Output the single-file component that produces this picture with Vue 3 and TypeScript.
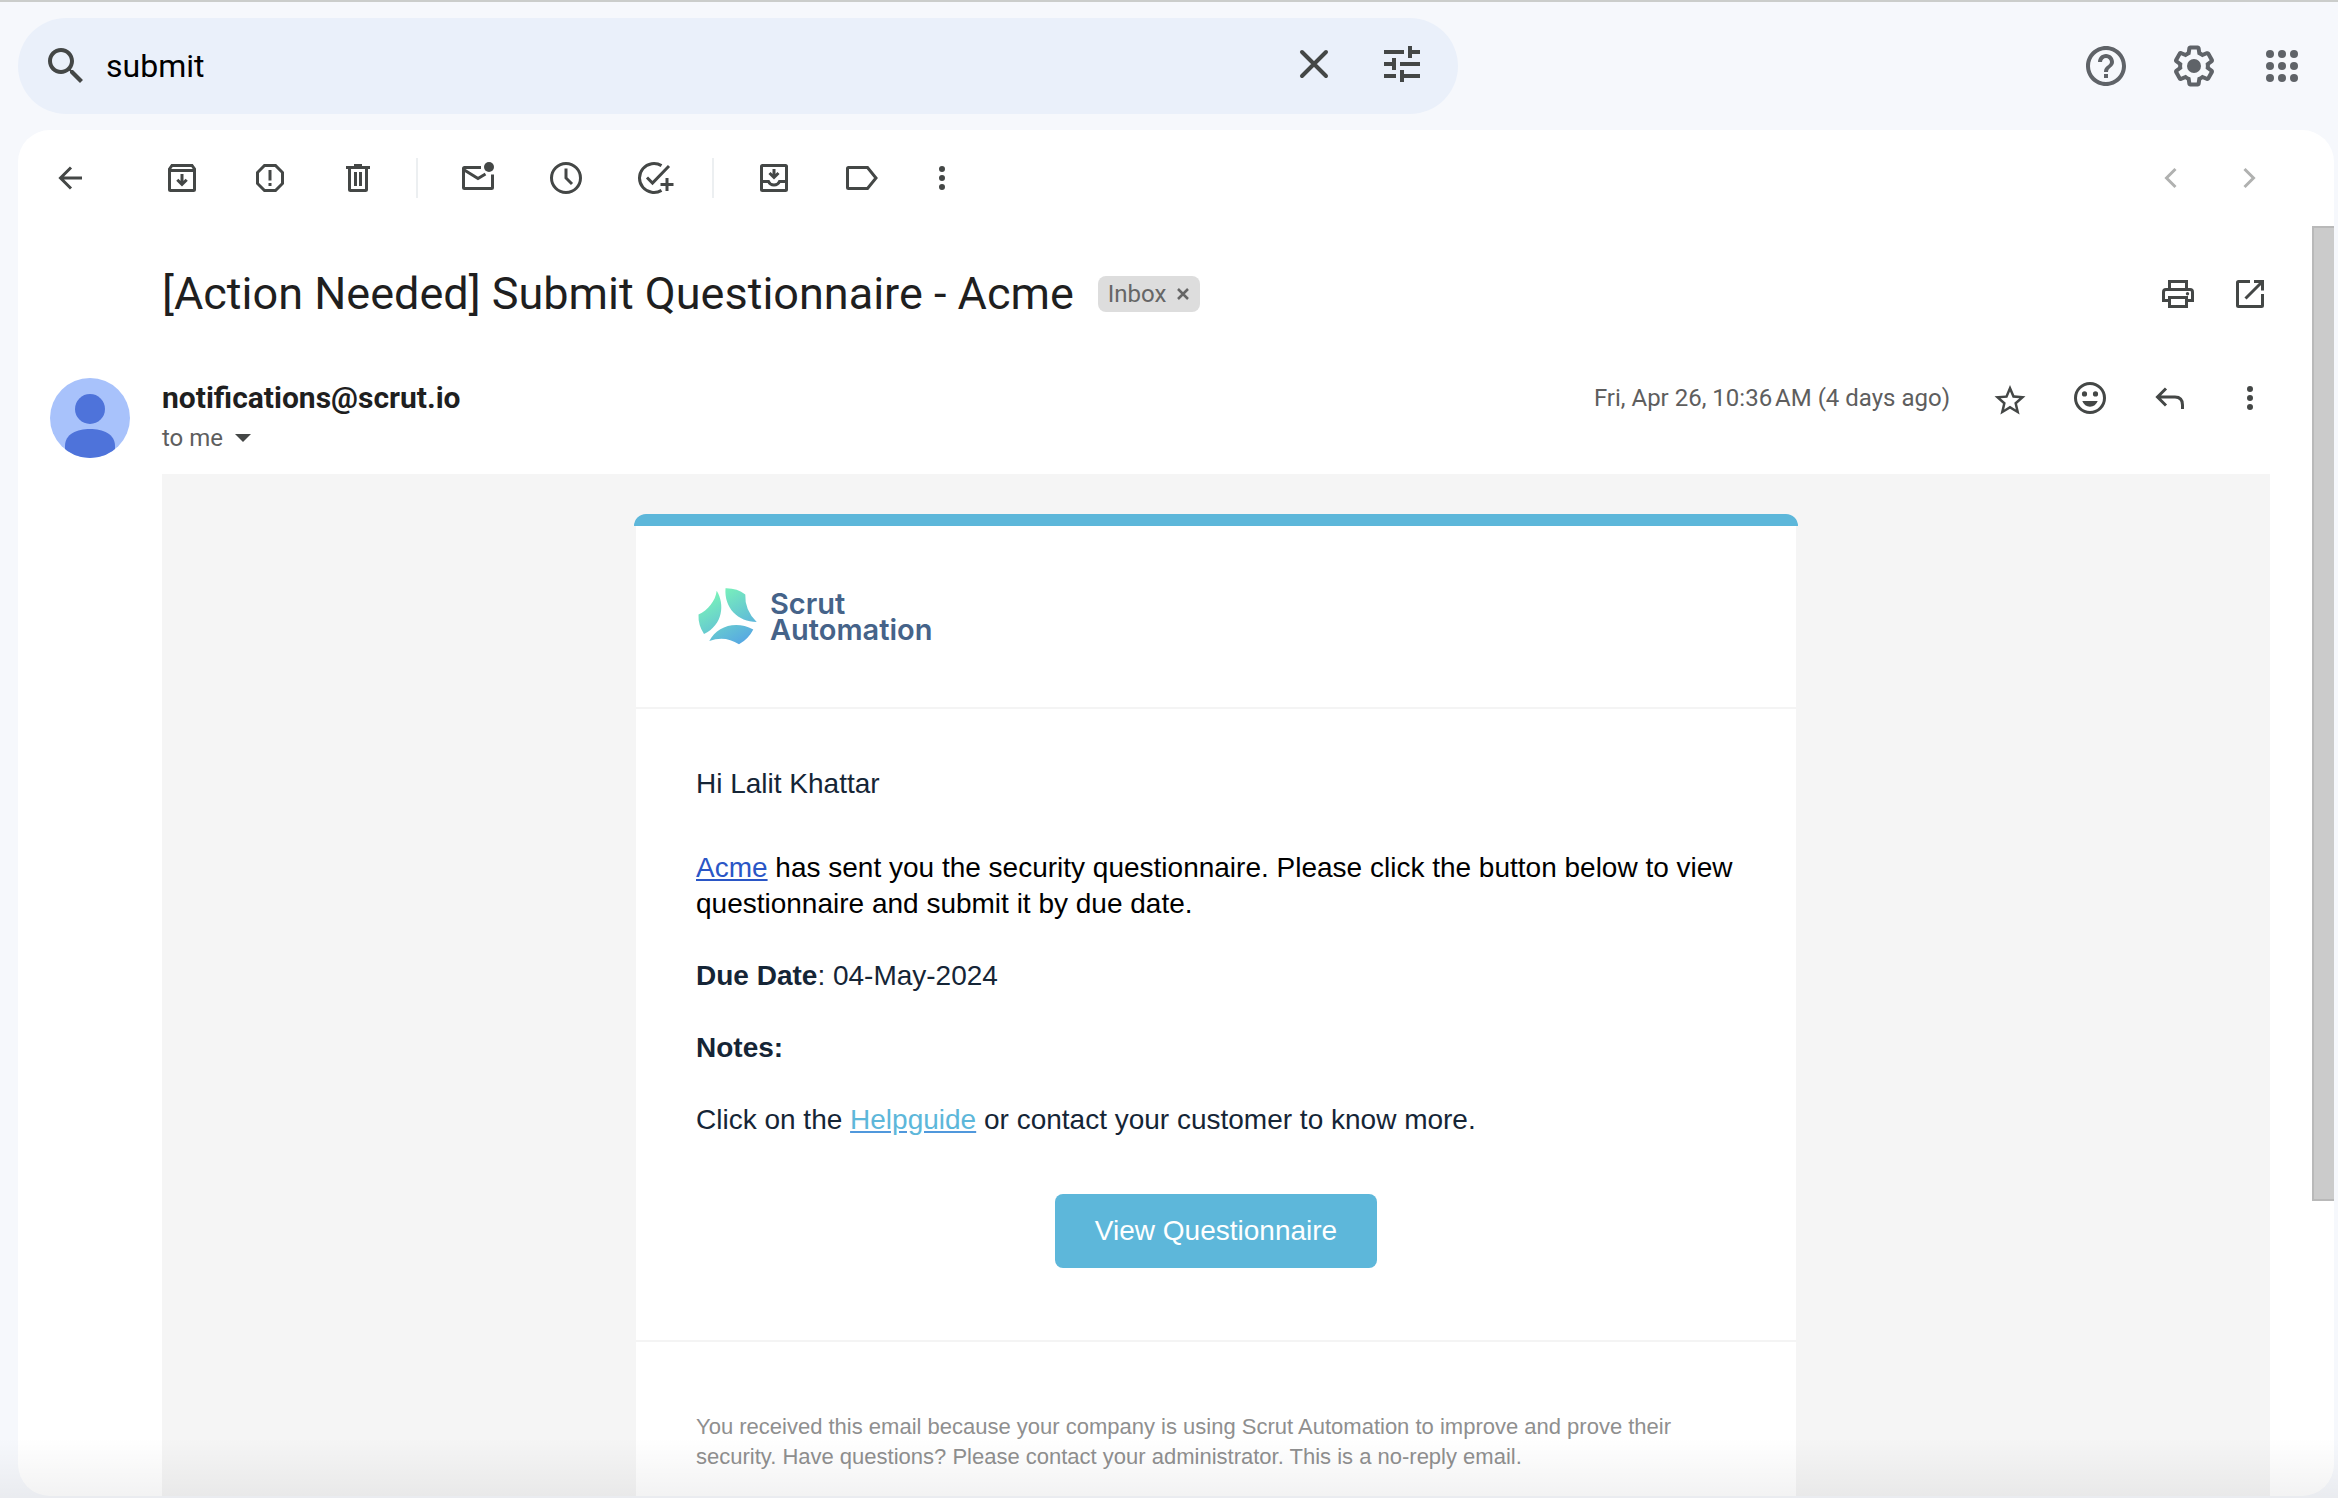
<script setup lang="ts">
import { ref } from 'vue'

interface ToolIcon {
  label: string
  // stroked outline on a 40 x 40 grid
  line?: string
  // filled shapes on the same grid
  fill?: string
}

const query = ref('submit')

const dots = 'M20 8a3 3 0 1 1 0 6 3 3 0 0 1 0-6zM20 17a3 3 0 1 1 0 6 3 3 0 0 1 0-6zM20 26a3 3 0 1 1 0 6 3 3 0 0 1 0-6z'

const back: ToolIcon = { label: 'Back to search results', line: 'M32 20H10.5M21 9.500L10.500 20L21 30.500' }

const toolGroups: ToolIcon[][] = [
  [
    {
      label: 'Archive',
      line: 'M7.500 11L10 7.500H30L32.500 11V31.500Q32.500 32.500 31.500 32.500H8.500Q7.500 32.500 7.500 31.500ZM7.500 12.500H32.500M20 16V26M15.300 21.800L20 26.500L24.700 21.800',
    },
    {
      label: 'Report spam',
      line: 'M14.500 7.500H25.500L32.500 14.500V25.500L25.500 32.500H14.500L7.500 25.500V14.500ZM20 12V22.500',
      fill: 'M18.500 25H21.500V28H18.500Z',
    },
    {
      label: 'Delete',
      line: 'M8 9.500H32M16 7.500H24M11.500 10V31.500Q11.500 32.500 12.500 32.500H27.500Q28.500 32.500 28.500 31.500V10M17.500 14V28M22.500 14V28',
    },
  ],
  [
    {
      label: 'Mark as unread',
      line: 'M23 9.500H6.500Q5.500 9.500 5.500 10.500V29.500Q5.500 30.500 6.500 30.500H33.500Q34.500 30.500 34.500 29.500V16.500M5.500 11.500L20 20.500L27.500 16',
      fill: 'M31 4a5 5 0 1 1 0 10a5 5 0 0 1 0-10z',
    },
    { label: 'Snooze', line: 'M20 5.500a14.500 14.500 0 1 1 0 29a14.500 14.500 0 0 1 0-29zM20 10.500V20L26 26' },
    {
      label: 'Add to Tasks',
      line: 'M27.500 7.600A14.500 14.500 0 1 0 27.500 32.400M13 19.500L18.500 25L35 8M33 20V33M26.500 26.500H39.500',
    },
  ],
  [
    {
      label: 'Move to',
      line: 'M8.500 7.500H31.500Q32.500 7.500 32.500 8.500V31.500Q32.500 32.500 31.500 32.500H8.500Q7.500 32.500 7.500 31.500V8.500Q7.500 7.500 8.500 7.500ZM7.500 23.500H14.500Q16 27 20 27T25.500 23.500H32.500M20 11V19M15.500 15L20 19.500L24.500 15',
    },
    { label: 'Labels', line: 'M6.500 9.500H25.500L34 20L25.500 30.500H6.500Q5.500 30.500 5.500 29.500V10.500Q5.500 9.500 6.500 9.500Z' },
    { label: 'More', fill: dots },
  ],
]

const pager: ToolIcon[] = [
  { label: 'Newer', line: 'M25.500 11L16.500 20L25.500 29' },
  { label: 'Older', line: 'M14.500 11L23.500 20L14.500 29' },
]

const subjectTools: ToolIcon[] = [
  {
    label: 'Print all',
    line: 'M11.500 15V7.500H28.500V15M10 26.500H5.500V18Q5.500 15.500 8 15.500H32Q34.500 15.500 34.500 18V26.500H30M11.500 23.500H28.500V32.500H11.500Z',
    fill: 'M29.500 18a1.700 1.700 0 1 1 0 3.400a1.700 1.700 0 0 1 0-3.400z',
  },
  {
    label: 'In new window',
    line: 'M20 7.500H8.500Q7.500 7.500 7.500 8.500V31.500Q7.500 32.500 8.500 32.500H31.500Q32.500 32.500 32.500 31.500V20M15.500 24.500L32 8M24 7.500H32.500V16.500',
  },
]

const messageTools: ToolIcon[] = [
  { label: 'Add reaction', line: 'M20 5.500a14.500 14.500 0 1 1 0 29a14.500 14.500 0 0 1 0-29z', fill: 'M14.500 13.300a2.600 2.600 0 1 1 0 5.200a2.600 2.600 0 0 1 0-5.200zM25.500 13.300a2.600 2.600 0 1 1 0 5.200a2.600 2.600 0 0 1 0-5.200zM12.300 23H27.700Q25.500 28.700 20 28.700T12.300 23Z' },
  { label: 'Reply', line: 'M16 10.500L7.500 19L16 27.500M8 19H25Q32.500 19 32.500 27V31' },
  { label: 'More', fill: dots },
]
</script>

<template>
  <div class="mail">
    <header class="topbar">
      <form class="search" role="search" @submit.prevent>
        <button class="plain" type="submit" aria-label="Search">
          <svg class="big" viewBox="0 0 24 24"><path d="M15.500 14h-.79l-.28-.27C15.410 12.590 16 11.110 16 9.500 16 5.910 13.090 3 9.500 3S3 5.910 3 9.500 5.910 16 9.500 16c1.610 0 3.090-.59 4.230-1.570l.27.28v.79l5 4.990L20.490 19l-4.990-5zm-6 0C7.010 14 5 11.990 5 9.500S7.010 5 9.500 5 14 7.010 14 9.500 11.990 14 9.500 14z" /></svg>
        </button>
        <input v-model="query" class="query" type="text" aria-label="Search mail" />
        <div class="search-tools">
          <button class="plain" type="button" aria-label="Clear search">
            <svg class="big" viewBox="0 0 24 24"><path d="M6 6L18 18M18 6L6 18" fill="none" stroke="currentColor" stroke-width="2" stroke-linecap="round" /></svg>
          </button>
          <button class="plain" type="button" aria-label="Show search options">
            <svg class="big" viewBox="0 0 24 24"><path d="M3 17v2h6v-2H3zM3 5v2h10V5H3zm10 16v-2h8v-2h-8v-2h-2v6h2zM7 9v2H3v2h4v2h2V9H7zm14 4v-2H11v2h10zm-6-4h2V7h4V5h-4V3h-2v6z" /></svg>
          </button>
        </div>
      </form>
      <nav class="account">
        <button class="plain" type="button" aria-label="Support">
          <svg class="big" viewBox="0 0 24 24"><path d="M11 18h2v-2h-2v2zm1-16C6.480 2 2 6.480 2 12s4.480 10 10 10 10-4.480 10-10S17.520 2 12 2zm0 18c-4.410 0-8-3.590-8-8s3.590-8 8-8 8 3.590 8 8-3.590 8-8 8zm0-14c-2.210 0-4 1.790-4 4h2c0-1.100.9-2 2-2s2 .9 2 2c0 2-3 1.750-3 5h2c0-2.250 3-2.500 3-5 0-2.210-1.790-4-4-4z" /></svg>
        </button>
        <button class="plain" type="button" aria-label="Settings">
          <svg class="big" viewBox="0 0 24 24"><path d="M13.850 22.250h-3.700c-.74 0-1.360-.54-1.450-1.270l-.27-1.890c-.27-.14-.53-.29-.79-.46l-1.800.72c-.7.26-1.470-.03-1.810-.65L2.200 15.530c-.35-.66-.2-1.440.36-1.880l1.530-1.190c-.01-.15-.02-.3-.02-.46 0-.15.01-.31.02-.46l-1.520-1.190c-.59-.45-.74-1.260-.37-1.880l1.850-3.190c.34-.62 1.110-.9 1.790-.63l1.810.73c.26-.17.52-.32.78-.46l.27-1.910c.09-.7.71-1.250 1.440-1.250h3.700c.74 0 1.360.54 1.450 1.270l.27 1.890c.27.14.53.29.79.46l1.800-.72c.71-.26 1.480.03 1.820.65l1.840 3.180c.36.66.2 1.440-.36 1.880l-1.520 1.190c.01.15.02.3.02.46s-.01.31-.02.46l1.520 1.190c.56.45.72 1.230.37 1.860l-1.860 3.220c-.34.62-1.110.9-1.800.63l-1.800-.72c-.26.17-.52.32-.78.46l-.27 1.910c-.1.68-.72 1.220-1.460 1.220zm-3.230-2h2.760l.37-2.550.53-.22c.44-.18.88-.44 1.340-.78l.45-.34 2.380.96 1.380-2.400-2.030-1.580.07-.56c.03-.26.06-.51.06-.78s-.03-.53-.06-.78l-.07-.56 2.030-1.580-1.390-2.400-2.390.96-.45-.35c-.42-.32-.87-.58-1.330-.77l-.52-.22-.37-2.550h-2.760l-.37 2.550-.53.21c-.44.19-.88.44-1.340.79l-.45.33-2.380-.95-1.390 2.390 2.030 1.580-.07.56a7 7 0 0 0-.06.79c0 .26.02.53.06.78l.07.56-2.030 1.580 1.380 2.400 2.390-.96.45.35c.43.33.86.58 1.330.77l.53.22.38 2.550z" /><circle cx="12" cy="12" r="3.500" /></svg>
        </button>
        <button class="plain" type="button" aria-label="Google apps">
          <svg class="big" viewBox="0 0 24 24">
            <template v-for="y in [6, 12, 18]" :key="y">
              <circle v-for="x in [6, 12, 18]" :key="x" :cx="x" :cy="y" r="2" />
            </template>
          </svg>
        </button>
      </nav>
    </header>

    <main class="panel">
      <div class="toolbar">
        <button class="plain back" type="button" :aria-label="back.label">
          <svg class="icon" viewBox="0 0 40 40"><path class="line" :d="back.line" /></svg>
        </button>
        <div v-for="(group, g) in toolGroups" :key="g" class="group">
          <button v-for="t in group" :key="t.label" class="plain" type="button" :aria-label="t.label">
            <svg class="icon" viewBox="0 0 40 40">
              <path v-if="t.line" class="line" :d="t.line" />
              <path v-if="t.fill" :d="t.fill" />
            </svg>
          </button>
        </div>
        <div class="pager">
          <button v-for="t in pager" :key="t.label" class="plain" type="button" :aria-label="t.label" disabled>
            <svg class="icon" viewBox="0 0 40 40"><path class="line" :d="t.line" /></svg>
          </button>
        </div>
      </div>

      <div class="scroller">
        <article class="thread">
          <div class="subject-row">
            <h1 class="subject">[Action Needed] Submit Questionnaire - Acme</h1>
            <span class="chip">Inbox
              <button class="plain" type="button" aria-label="Remove label Inbox">
                <svg class="tiny" viewBox="0 0 14 14"><path d="M2 2L12 12M12 2L2 12" fill="none" stroke="currentColor" stroke-width="2.500" /></svg>
              </button>
            </span>
            <div class="subject-tools">
              <button v-for="t in subjectTools" :key="t.label" class="plain" type="button" :aria-label="t.label">
                <svg class="icon" viewBox="0 0 40 40">
                  <path class="line" :d="t.line" />
                  <path v-if="t.fill" :d="t.fill" />
                </svg>
              </button>
            </div>
          </div>

          <div class="sender-row">
            <svg class="avatar" viewBox="0 0 80 80" aria-hidden="true">
              <clipPath id="avatar-clip"><circle cx="40" cy="40" r="40" /></clipPath>
              <g clip-path="url(#avatar-clip)">
                <rect width="80" height="80" fill="#a8c2fb" />
                <circle cx="40" cy="31" r="15" fill="#4e73da" />
                <path d="M15 80V68C15 56 27 51 40 51S65 56 65 68V80Z" fill="#4e73da" />
              </g>
            </svg>
            <div class="sender">
              <strong class="address">notifications@scrut.io</strong>
              <button class="plain recipients" type="button">
                to me
                <svg class="caret" viewBox="0 0 16 8"><path d="M0 0H16L8 8Z" /></svg>
              </button>
            </div>
            <div class="meta">
              <time datetime="2024-04-26T10:36">Fri, Apr 26, 10:36&#8239;AM (4 days ago)</time>
              <button class="plain" type="button" aria-label="Not starred">
                <svg class="icon" viewBox="0 0 40 40"><path transform="translate(1.400 4) scale(1.550)" d="M22 9.240l-7.190-.62L12 2 9.190 8.630 2 9.240l5.460 4.730L5.820 21 12 17.270 18.180 21l-1.630-7.030L22 9.240zM12 15.400l-3.760 2.270 1-4.280-3.320-2.880 4.380-.38L12 6.100l1.710 4.040 4.380.38-3.320 2.880 1 4.280L12 15.400z" /></svg>
              </button>
              <button v-for="t in messageTools" :key="t.label" class="plain" type="button" :aria-label="t.label">
                <svg class="icon" viewBox="0 0 40 40">
                  <path v-if="t.line" class="line" :d="t.line" />
                  <path v-if="t.fill" :d="t.fill" />
                </svg>
              </button>
            </div>
          </div>

          <section class="email">
            <div class="accent"></div>
            <div class="card">
              <div class="brand">
                <svg class="mark" viewBox="0 0 60 58" aria-hidden="true">
                  <defs>
                    <linearGradient id="brand-fade" gradientUnits="userSpaceOnUse" x1="16" y1="4" x2="46" y2="56">
                      <stop offset="0" stop-color="#7af3b9" />
                      <stop offset="1" stop-color="#56a6e4" />
                    </linearGradient>
                  </defs>
                  <g fill="url(#brand-fade)">
                    <path d="M18.700 2.700C27 16 25 37 6 46Q0 37 .5 26.500C10 22 17.500 13 18.700 2.700Z" />
                    <path d="M27.500 .3Q39 0 47.300 6.500Q46.500 22 58.700 34C40 34 26 20 27.500 .3Z" />
                    <path d="M11.300 53C19 38 38 32 55.300 41.500Q50.500 51 41 56.300Q27 47 11.300 53Z" />
                  </g>
                </svg>
                <span class="wordmark">Scrut<br />Automation</span>
              </div>
              <div class="copy">
                <p class="greeting">Hi Lalit Khattar</p>
                <p class="lead"><a class="company" href="#">Acme</a> has sent you the security questionnaire. Please click the button below to view questionnaire and submit it by due date.</p>
                <p><b>Due Date</b>: 04-May-2024</p>
                <p><b>Notes:</b></p>
                <p>Click on the <a class="guide" href="#">Helpguide</a> or contact your customer to know more.</p>
                <button class="cta" type="button">View Questionnaire</button>
              </div>
              <p class="footnote">You received this email because your company is using Scrut Automation to improve and prove their security. Have questions? Please contact your administrator. This is a no-reply email.</p>
            </div>
          </section>
        </article>
        <div class="track"><div class="thumb"></div></div>
      </div>
    </main>
  </div>
</template>

<style>
body {
  margin: 0;
}
</style>

<style scoped>
.mail {
  box-sizing: border-box;
  position: relative;
  display: flex;
  flex-direction: column;
  height: 100vh;
  padding: 0 4px 2px 18px;
  overflow: hidden;
  border-top: 2px solid #cbcdcb;
  background: #f6f8fc;
  color: #444746;
  font-family: Roboto, "Liberation Sans", sans-serif;
}
.mail::after {
  content: "";
  position: absolute;
  inset: auto 0 0;
  height: 60px;
  background: linear-gradient(rgba(0, 0, 10, 0), rgba(0, 0, 10, 0.05));
  pointer-events: none;
}
svg {
  display: block;
  fill: currentColor;
}
.line {
  fill: none;
  stroke: currentColor;
  stroke-width: 3;
}
.plain {
  flex: none;
  margin: 0;
  padding: 0;
  border: 0;
  background: none;
  color: inherit;
  font: inherit;
}
.big {
  width: 48px;
  height: 48px;
}
.icon {
  width: 40px;
  height: 40px;
}
.topbar {
  display: flex;
  flex: none;
  align-items: center;
  justify-content: space-between;
  padding: 16px 28px 16px 0;
}
.search {
  box-sizing: border-box;
  display: flex;
  flex: 0 1 1440px;
  align-items: center;
  height: 96px;
  padding: 0 32px 0 24px;
  border-radius: 48px;
  background: #eaf0fa;
}
.query {
  flex: 1;
  min-width: 0;
  height: 48px;
  margin: 0 0 0 16px;
  padding: 0;
  border: 0;
  outline: 0;
  background: none;
  color: #000;
  font: 32px/48px Roboto, "Liberation Sans", sans-serif;
}
.search-tools {
  display: flex;
  gap: 40px;
  padding-bottom: 4px;
}
.account {
  display: flex;
  gap: 40px;
  color: #5f6368;
}
.panel {
  display: flex;
  flex: 1;
  flex-direction: column;
  min-height: 0;
  overflow: hidden;
  border-radius: 32px;
  background: #fff;
}
.toolbar {
  display: flex;
  flex: none;
  align-items: center;
  height: 96px;
  padding: 0 64px 0 32px;
}
.back {
  margin-right: 72px;
}
.group {
  display: flex;
  align-items: center;
  gap: 48px;
}
.group + .group {
  margin-left: 38px;
}
.group + .group::before {
  content: "";
  width: 2px;
  height: 40px;
  margin-right: -8px;
  background: #eceff1;
}
.group:nth-of-type(3) > :last-child {
  margin-left: -8px;
}
.pager {
  display: flex;
  gap: 40px;
  margin-left: auto;
  color: #b0b1b0;
}
.scroller {
  display: flex;
  flex: 1;
  min-height: 0;
}
.thread {
  flex: 1;
  min-width: 0;
}
.track {
  flex: none;
  width: 22px;
}
.thumb {
  box-sizing: border-box;
  height: 76.8%;
  border: 2px solid #b9b9b9;
  border-right: 0;
  background: #cbcbcb;
}
.subject-row {
  display: flex;
  align-items: center;
  height: 136px;
  padding: 0 42px 0 144px;
}
.subject {
  margin: 0;
  color: #1f1f1f;
  font-size: 45px;
  font-weight: 400;
  line-height: 56px;
  white-space: nowrap;
}
.chip {
  display: flex;
  align-items: center;
  gap: 10px;
  height: 36px;
  margin-left: 24px;
  padding: 0 10px;
  border-radius: 8px;
  background: #ddd;
  color: #666;
  font-size: 24px;
}
.tiny {
  width: 14px;
  height: 14px;
}
.subject-tools {
  display: flex;
  gap: 32px;
  margin-left: auto;
}
.sender-row {
  display: flex;
  align-items: flex-start;
  padding: 16px 42px 16px 32px;
}
.avatar {
  flex: none;
  width: 80px;
  height: 80px;
}
.sender {
  display: flex;
  flex-direction: column;
  align-items: flex-start;
  margin-left: 32px;
}
.address {
  color: #1f1f1f;
  font-size: 30px;
  font-weight: 700;
  line-height: 40px;
}
.recipients {
  display: flex;
  align-items: center;
  gap: 12px;
  color: #5e5e5e;
  font-size: 24px;
  line-height: 40px;
}
.caret {
  width: 16px;
  height: 8px;
  color: #444746;
}
.meta {
  display: flex;
  align-items: center;
  gap: 40px;
  margin-left: auto;
  font-size: 24px;
  line-height: 40px;
}
.meta time {
  color: #5e5e5e;
}
.email {
  display: flex;
  flex-direction: column;
  align-items: center;
  margin: 0 42px 0 144px;
  padding-top: 40px;
  background: #f5f5f5;
  font-family: "Liberation Sans", Arial, sans-serif;
}
.accent {
  width: 100%;
  max-width: 1164px;
  height: 12px;
  border-radius: 14px 14px 0 0;
  background: #5db7da;
}
.card {
  width: 100%;
  max-width: 1160px;
  background: #fff;
}
.brand {
  display: flex;
  align-items: center;
  gap: 12px;
  padding: 62px 62px 61px;
  border-bottom: 2px solid #f4f4f4;
}
.mark {
  width: 60px;
  height: 58px;
}
.wordmark {
  color: #456389;
  font: 600 29px/26px Inter, "Liberation Sans", sans-serif;
}
.copy {
  padding: 57px 60px 72px;
  border-bottom: 2px solid #f4f4f4;
  color: #152536;
  font-size: 28px;
  line-height: 36px;
}
.copy p {
  margin: 0 0 36px;
}
.copy .greeting {
  margin-bottom: 48px;
}
.copy .lead {
  color: #000;
}
.company {
  color: #2a56c6;
}
.guide {
  color: #5db7da;
  text-decoration-color: #5098dc;
}
.cta {
  display: block;
  height: 74px;
  margin: 56px auto 0;
  padding: 0 40px;
  border: 0;
  border-radius: 8px;
  background: #5db7da;
  color: #fff;
  font: 28px/36px "Liberation Sans", Arial, sans-serif;
}
.footnote {
  margin: 0;
  padding: 70px 60px 80px;
  color: #8f8f8f;
  font-size: 22px;
  line-height: 30px;
}
</style>
